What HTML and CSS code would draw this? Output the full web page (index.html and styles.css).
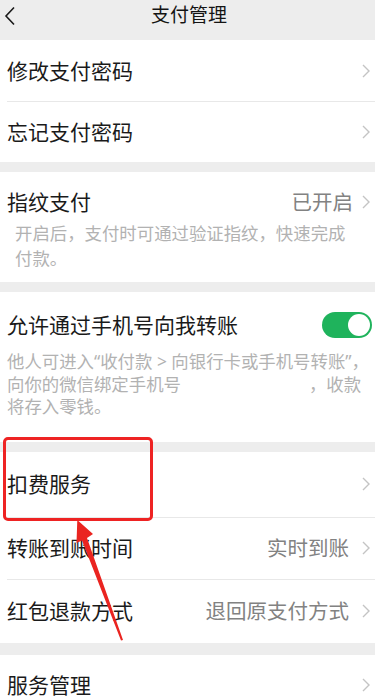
FILE: index.html
```html
<!DOCTYPE html>
<html lang="zh-CN">
<head>
<meta charset="utf-8">
<title>支付管理</title>
<link rel="stylesheet" href="styles.css">
</head>
<body>
<div class="page">
  <header class="nav">
    <svg class="back" width="12" height="20" viewBox="0 0 12 20"><polyline points="10,1.5 2,10 10,18.5" fill="none" stroke="#1a1a1a" stroke-width="1.6"/></svg>
    <div class="nav-title">支付管理</div>
    <span></span>
  </header>

  <section class="group">
    <div class="row"><span class="label">修改支付密码</span><svg class="chev" width="8" height="14" viewBox="0 0 8 14"><polyline points="1,1 7,7 1,13" fill="none" stroke="#c4c4c4" stroke-width="1.4"/></svg></div>
    <div class="row"><span class="label">忘记支付密码</span><svg class="chev" width="8" height="14" viewBox="0 0 8 14"><polyline points="1,1 7,7 1,13" fill="none" stroke="#c4c4c4" stroke-width="1.4"/></svg></div>
  </section>

  <section class="group block block-finger">
    <div class="block-head"><span class="label">指纹支付</span><span class="value">已开启</span><svg class="chev chev-near" width="8" height="14" viewBox="0 0 8 14"><polyline points="1,1 7,7 1,13" fill="none" stroke="#c4c4c4" stroke-width="1.4"/></svg></div>
    <p class="desc desc-finger">开启后，支付时可通过验证指纹，快速完成<br>付款。</p>
  </section>

  <section class="group block block-phone">
    <div class="block-head"><span class="label">允许通过手机号向我转账</span><span class="switch"><span class="knob"></span></span></div>
    <p class="desc desc-phone">他人可进入“收付款 &gt; 向银行卡或手机号转账”，<br>向你的微信绑定手机号<span class="blur"></span>，收款<br>将存入零钱。</p>
  </section>

  <section class="group group-services">
    <div class="row row-a"><span class="label">扣费服务</span><svg class="chev" width="8" height="14" viewBox="0 0 8 14"><polyline points="1,1 7,7 1,13" fill="none" stroke="#c4c4c4" stroke-width="1.4"/></svg></div>
    <div class="row row-b"><span class="label">转账到账时间</span><span class="value">实时到账</span><svg class="chev" width="8" height="14" viewBox="0 0 8 14"><polyline points="1,1 7,7 1,13" fill="none" stroke="#c4c4c4" stroke-width="1.4"/></svg></div>
    <div class="row row-c"><span class="label">红包退款方式</span><span class="value">退回原支付方式</span><svg class="chev" width="8" height="14" viewBox="0 0 8 14"><polyline points="1,1 7,7 1,13" fill="none" stroke="#c4c4c4" stroke-width="1.4"/></svg></div>
  </section>

  <section class="group">
    <div class="row"><span class="label">服务管理</span><svg class="chev" width="8" height="14" viewBox="0 0 8 14"><polyline points="1,1 7,7 1,13" fill="none" stroke="#c4c4c4" stroke-width="1.4"/></svg></div>
  </section>

  <div class="highlight"></div>
  <svg class="arrow" width="375" height="698" viewBox="0 0 375 698">
    <polygon points="77.3,520 93,534 87,538 123,640 121,640.5 82,540.5 76.5,543" fill="#ea2420"/>
  </svg>
</div>
</body>
</html>
```

FILE: styles.css
```css
* { box-sizing: border-box; }
html, body { margin: 0; padding: 0; }
body {
  background: #ededed;
  font-family: "Noto Sans", "Noto Sans CJK SC", sans-serif;
  color: #1a1a1a;
}
.page {
  position: relative;
  width: 375px;
  height: 698px;
  overflow: hidden;
  background: #ededed;
}
.nav {
  height: 40px;
  display: grid;
  grid-template-columns: 40px 1fr 40px;
  align-items: start;
  padding-top: 4px;
}
.back { margin: 2px 0 0 4px; display: block; }
.nav-title {
  text-align: center;
  font-size: 19px;
  line-height: 22px;
  color: #141414;
  padding-left: 3px;
}
.group {
  background: #fff;
  margin-bottom: 10px;
}
.group-services { margin-bottom: 12px; }
.row {
  display: flex;
  align-items: center;
  height: 61px;
  margin-left: 7px;
  padding-right: 5px;
}
.row + .row { border-top: 1px solid #e8e8e8; }
.row-a { height: 65px; }
.row-b { height: 62px; }
.row-c { height: 64px; }
.label {
  font-size: 21px;
  line-height: 30px;
  color: #1a1a1a;
  white-space: nowrap;
  flex: 1;
}
.value {
  font-size: 20.5px;
  line-height: 30px;
  color: #828282;
  white-space: nowrap;
}
.chev { display: block; margin-left: 13px; flex: none; }
.chev-near { margin-left: 9px; }
.block { padding-left: 7px; padding-right: 5px; }
.block-finger { padding-top: 15px; padding-bottom: 11px; }
.block-phone { padding-top: 18px; padding-bottom: 24px; }
.block-head { display: flex; align-items: center; }
.desc {
  margin: 0;
  font-size: 17.4px;
  color: #b2b2b2;
  white-space: nowrap;
}
.desc-finger { margin-top: 4px; line-height: 25px; padding-left: 8px; }
.desc-phone { margin-top: 10px; line-height: 22.5px; }
.blur { display: inline-block; width: 128px; height: 10px; }
.switch {
  display: flex;
  align-items: center;
  justify-content: flex-end;
  width: 50px;
  height: 26px;
  border-radius: 13px;
  background: #1fb35c;
  padding: 2px;
  margin-right: -2px;
  flex: none;
}
.knob {
  width: 22px;
  height: 22px;
  border-radius: 50%;
  background: #fff;
}
.highlight {
  position: absolute;
  left: 3px;
  top: 437px;
  width: 150px;
  height: 84px;
  border: 3px solid #ee2323;
  border-radius: 5px;
}
.arrow {
  position: absolute;
  left: 0;
  top: 0;
  pointer-events: none;
}
```
